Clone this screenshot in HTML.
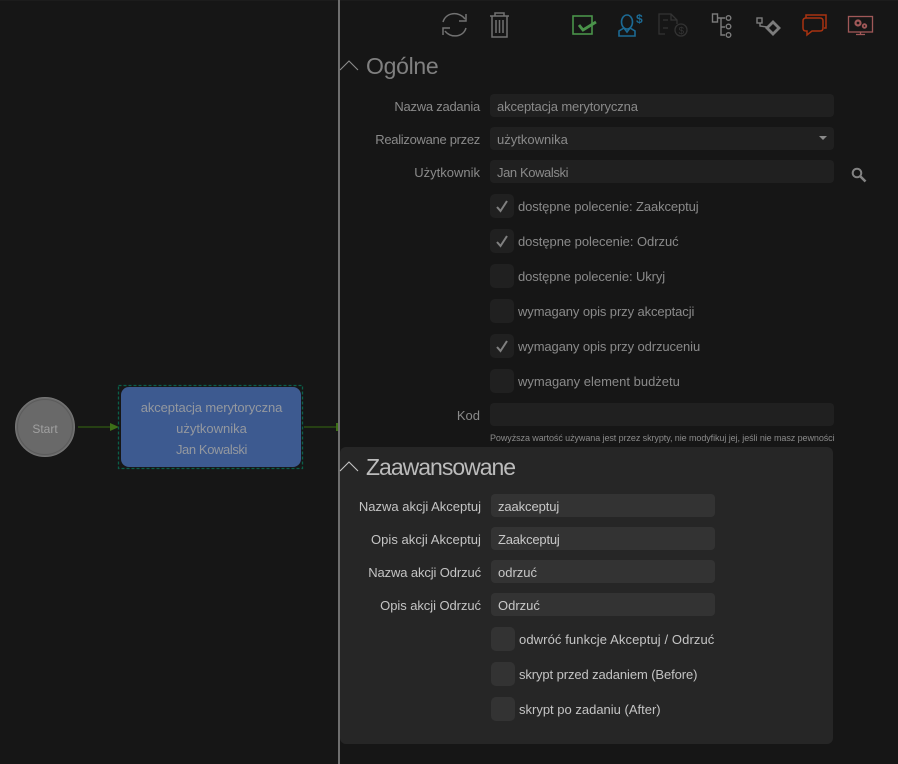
<!DOCTYPE html>
<html lang="pl"><head><meta charset="utf-8"><title>Zadanie</title>
<style>
html,body{margin:0;padding:0;background:#161616}
body{width:898px;height:764px;position:relative;overflow:hidden;font-family:"Liberation Sans",sans-serif;font-size:13px;color:#8a8a8a}
.a{position:absolute}
.l{position:absolute;text-align:right;white-space:nowrap;line-height:20px;height:20px}
.g .l{left:340px;width:140px}
.z .l{left:340px;width:141px;color:#c4c4c4}
.f{position:absolute;height:23px;border-radius:4px;background:#202020;line-height:25px;padding-left:7px;box-sizing:border-box;color:#8a8a8a;white-space:nowrap}
.g .f{left:490px;width:344px}
.z .f{left:491px;width:224px;background:#333;color:#c8c8c8}
.c{position:absolute;width:24px;height:24px;border-radius:5px;background:#202020}
.g .c{left:490px}.z .c{left:491px;background:#333}
.c svg{position:absolute;left:5px;top:5px}
.t{position:absolute;white-space:nowrap;line-height:20px}
.g .t{left:518px}.z .t{left:519px;color:#c4c4c4}
.h{position:absolute;font-size:23px;line-height:30px;left:366px;white-space:nowrap}
</style></head><body>
<div class="a" style="left:0;top:0;width:898px;height:1px;background:#1c1c1c"></div>

<svg class="a" style="left:0;top:370px" width="340" height="110" viewBox="0 0 340 110">
<circle cx="45" cy="57" r="29.500" fill="#696969" stroke="#767676" stroke-width="1"/>
<circle cx="45" cy="57" r="27.500" fill="none" stroke="#5c5c5c" stroke-width="1"/>
<path d="M78 57H112" stroke="#2c4f12" stroke-width="1.500"/><path d="M110 53L119 57L110 61Z" fill="#3d6f18"/>
<path d="M304 57H337" stroke="#2c4f12" stroke-width="1.500"/>
<rect x="118.500" y="15.500" width="184" height="83" fill="none" stroke="#0a5f48" stroke-width="1.300" stroke-dasharray="3 2"/>
<rect x="121" y="17" width="180" height="80" rx="8" fill="#3d5a90"/>
</svg>
<div class="a" style="left:15px;top:419px;width:60px;text-align:center;line-height:20px;color:#a0a0a0;font-size:12px">Start</div>
<div class="a" style="left:121px;top:397px;width:181px;text-align:center;line-height:21px;color:#94989f;font-size:13px"><span style="letter-spacing:-.1px">akceptacja merytoryczna</span><br>użytkownika<br><span style="letter-spacing:-.4px">Jan Kowalski</span></div>

<div class="a" style="left:338px;top:0;width:2px;height:764px;background:#6e6e6e"></div>
<div class="a" style="left:336px;top:423px;width:2px;height:8px;background:#3d6f18"></div>

<!-- toolbar -->
<svg class="a" style="left:430px;top:0" width="460" height="50" viewBox="0 0 460 50" fill="none">
<g stroke="#727272" stroke-width="1.500">
<path d="M13 22C16 12 29 11 35 19"/><path d="M36 14V21H29"/>
<path d="M36 28C33 38 20 38 15 31"/><path d="M13 35V28H20"/>
<path d="M62 16V37H77V16M60 16H79M65 16V13H74V16"/>
<path d="M66 20V33M69.500 20V33M73 20V33"/>
</g>
<rect x="143" y="16" width="19" height="18" stroke="#4a934a" stroke-width="1.600"/>
<path d="M149 25L153 30L166 22" stroke="#4a934a" stroke-width="2.800"/>
<g stroke="#1c6a94" stroke-width="1.600">
<ellipse cx="197" cy="22" rx="5.500" ry="7"/>
<path d="M189 36V31L194 28L197 32L200 28L205 31V36Z"/>
</g>
<text x="206" y="23" fill="#1c6a94" font-family="Liberation Sans" font-weight="bold" font-size="12">$</text>
<g stroke="#333" stroke-width="1.300">
<path d="M235 34H229V14H241L247 20V24M241 14V20H247M233 20H238M233 28H238"/>
<circle cx="251" cy="30" r="6"/>
</g>
<text x="248.500" y="34" fill="#333" font-family="Liberation Sans" font-size="10">$</text>
<g stroke="#7c7c7c" stroke-width="1.400">
<rect x="282.500" y="14" width="5" height="8"/>
<path d="M288 18H295M291 18V35H295M291 27H295"/>
<circle cx="298.500" cy="18" r="2.300"/><circle cx="298.500" cy="26.500" r="2.300"/><circle cx="298.500" cy="35" r="2.300"/>
<rect x="327" y="18" width="5" height="5"/>
<path d="M330 23V26L337 27"/>
</g>
<path d="M343 22L349 28L343 34L337 28Z" stroke="#7c7c7c" stroke-width="2.800"/>
<g stroke="#a83210" stroke-width="1.500">
<path d="M376 18V15H396V28H394"/>
<path d="M376 18H390Q393 18 393 21V28Q393 31 390 31H382L377 35V31H376Q373 31 373 28V21Q373 18 376 18Z" fill="#161616"/>
</g>
<g stroke="#a05858" stroke-width="1.300">
<rect x="418.500" y="16.500" width="24" height="15.500"/>
<path d="M430.500 32V34M426 34.500H435"/>
<circle cx="428" cy="23" r="2.500" stroke-width="2.200"/><circle cx="434.500" cy="26" r="1.800" stroke-width="1.800"/>
</g>
</svg>

<!-- Ogolne -->
<div class="g">
<svg class="a" style="left:339px;top:58px" width="20" height="14" fill="none"><path d="M1 12L10 3L19 12" stroke="#8a8a8a" stroke-width="1.100"/></svg>
<div class="h" style="top:51px;color:#808080;letter-spacing:-.3px">Ogólne</div>
<div class="l" style="top:97px;letter-spacing:-.25px">Nazwa zadania</div><div class="f" style="top:94px;letter-spacing:-.13px">akceptacja merytoryczna</div>
<div class="l" style="top:130px;letter-spacing:-.3px">Realizowane przez</div><div class="f" style="top:127px">użytkownika</div>
<svg class="a" style="left:818px;top:135px" width="10" height="7"><path d="M1 1H9L5 5Z" fill="#8a8a8a"/></svg>
<div class="l" style="top:163px">Użytkownik</div><div class="f" style="top:160px;letter-spacing:-.4px">Jan Kowalski</div>
<svg class="a" style="left:850px;top:166px" width="18" height="17" fill="none"><circle cx="7" cy="7" r="4.300" stroke="#828282" stroke-width="2"/><path d="M10.500 10.500L15.500 15.500" stroke="#828282" stroke-width="2.600"/></svg>

<div class="c" style="top:194px"><svg width="14" height="14" fill="none"><path d="M2 8L5.500 12L12 2" stroke="#808080" stroke-width="2"/></svg></div><div class="t" style="top:197px;letter-spacing:-.1px">dostępne polecenie: Zaakceptuj</div>
<div class="c" style="top:229px"><svg width="14" height="14" fill="none"><path d="M2 8L5.500 12L12 2" stroke="#808080" stroke-width="2"/></svg></div><div class="t" style="top:232px;letter-spacing:-.05px">dostępne polecenie: Odrzuć</div>
<div class="c" style="top:264px"></div><div class="t" style="top:267px;letter-spacing:-.1px">dostępne polecenie: Ukryj</div>
<div class="c" style="top:299px"></div><div class="t" style="top:302px;letter-spacing:-.1px">wymagany opis przy akceptacji</div>
<div class="c" style="top:334px"><svg width="14" height="14" fill="none"><path d="M2 8L5.500 12L12 2" stroke="#808080" stroke-width="2"/></svg></div><div class="t" style="top:337px;letter-spacing:-.1px">wymagany opis przy odrzuceniu</div>
<div class="c" style="top:369px"></div><div class="t" style="top:372px">wymagany element budżetu</div>
<div class="l" style="top:406px">Kod</div><div class="f" style="top:403px"></div>
<div class="a" style="left:490px;top:431px;font-size:9px;letter-spacing:-.08px;line-height:14px;white-space:nowrap;color:#8a8a8a">Powyższa wartość używana jest przez skrypty, nie modyfikuj jej, jeśli nie masz pewności</div>
</div>

<!-- Zaawansowane -->
<div class="a" style="left:340px;top:447px;width:493px;height:297px;background:#262626;border-radius:6px"></div>
<div class="z">
<svg class="a" style="left:339px;top:459px" width="20" height="14" fill="none"><path d="M1 12L10 3L19 12" stroke="#c4c4c4" stroke-width="1.100"/></svg>
<div class="h" style="top:452px;color:#bcbcbc;letter-spacing:-1px">Zaawansowane</div>
<div class="l" style="top:497px">Nazwa akcji Akceptuj</div><div class="f" style="top:494px;letter-spacing:-.1px">zaakceptuj</div>
<div class="l" style="top:530px;letter-spacing:.05px">Opis akcji Akceptuj</div><div class="f" style="top:527px;letter-spacing:-.2px">Zaakceptuj</div>
<div class="l" style="top:563px;letter-spacing:-.12px">Nazwa akcji Odrzuć</div><div class="f" style="top:560px">odrzuć</div>
<div class="l" style="top:596px;letter-spacing:-.06px">Opis akcji Odrzuć</div><div class="f" style="top:593px">Odrzuć</div>
<div class="c" style="top:627px"></div><div class="t" style="top:630px;letter-spacing:.1px">odwróć funkcje Akceptuj / Odrzuć</div>
<div class="c" style="top:662px"></div><div class="t" style="top:665px;letter-spacing:-.1px">skrypt przed zadaniem (Before)</div>
<div class="c" style="top:697px"></div><div class="t" style="top:700px">skrypt po zadaniu (After)</div>
</div>
</body></html>
